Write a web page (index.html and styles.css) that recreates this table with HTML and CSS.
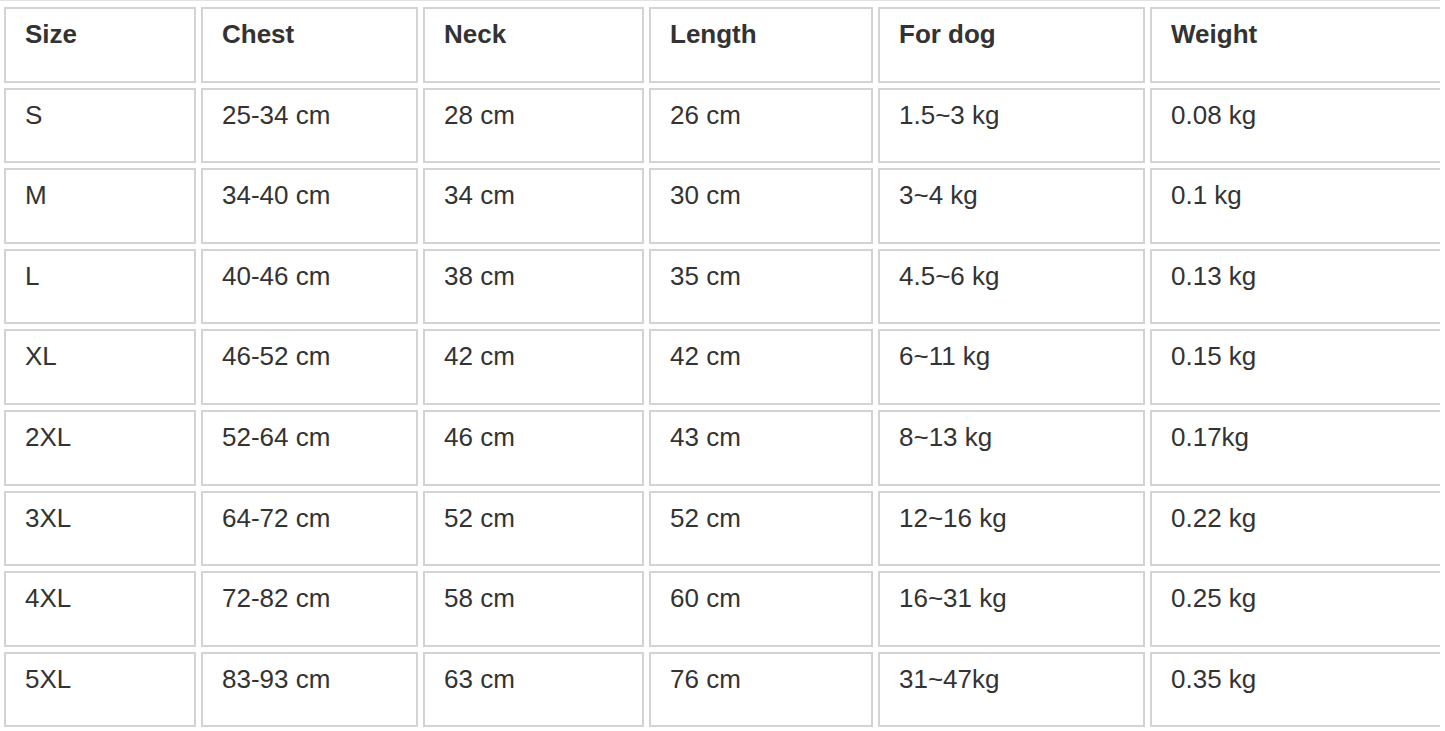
FILE: index.html
```html
<!DOCTYPE html>
<html lang="en">
<head>
<meta charset="utf-8">
<title>Size chart</title>
<link rel="stylesheet" href="styles.css">
</head>
<body>
<div class="clip">
<table class="sizes">
  <colgroup>
    <col class="c1"><col class="c2"><col class="c3"><col class="c4"><col class="c5"><col class="c6">
  </colgroup>
  <thead>
    <tr><th>Size</th><th>Chest</th><th>Neck</th><th>Length</th><th>For dog</th><th>Weight</th></tr>
  </thead>
  <tbody>
    <tr><td>S</td><td>25-34 cm</td><td>28 cm</td><td>26 cm</td><td>1.5~3 kg</td><td>0.08 kg</td></tr>
    <tr><td>M</td><td>34-40 cm</td><td>34 cm</td><td>30 cm</td><td>3~4 kg</td><td>0.1 kg</td></tr>
    <tr><td>L</td><td>40-46 cm</td><td>38 cm</td><td>35 cm</td><td>4.5~6 kg</td><td>0.13 kg</td></tr>
    <tr><td>XL</td><td>46-52 cm</td><td>42 cm</td><td>42 cm</td><td>6~11 kg</td><td>0.15 kg</td></tr>
    <tr><td>2XL</td><td>52-64 cm</td><td>46 cm</td><td>43 cm</td><td>8~13 kg</td><td>0.17kg</td></tr>
    <tr><td>3XL</td><td>64-72 cm</td><td>52 cm</td><td>52 cm</td><td>12~16 kg</td><td>0.22 kg</td></tr>
    <tr><td>4XL</td><td>72-82 cm</td><td>58 cm</td><td>60 cm</td><td>16~31 kg</td><td>0.25 kg</td></tr>
    <tr><td>5XL</td><td>83-93 cm</td><td>63 cm</td><td>76 cm</td><td>31~47kg</td><td>0.35 kg</td></tr>
  </tbody>
</table>
</div>
</body>
</html>
```
FILE: styles.css
```css
html, body {
  margin: 0;
  padding: 0;
  background: #ffffff;
}

.clip {
  width: 1440px;
  height: 731px;
  overflow: hidden;
  background: #ffffff;
}

.sizes {
  box-sizing: border-box;
  width: 1458px;
  margin-left: -2px;
  table-layout: fixed;
  border-collapse: separate;
  border-spacing: 5px;
  border: 1px solid #e2e2e2;
  padding-top: 1px;
  font-family: "Liberation Sans", Arial, Helvetica, sans-serif;
  font-size: 26px;
  color: #333333;
}

.c1 { width: 192px; }
.c2 { width: 217px; }
.c3 { width: 221px; }
.c4 { width: 224px; }
.c5 { width: 267px; }
.c6 { width: 300px; }

.sizes th,
.sizes td {
  box-sizing: border-box;
  height: 75.6px;
  border: 2px solid #d3d3d3;
  padding: 10px 10px 0 19px;
  vertical-align: top;
  text-align: left;
  white-space: nowrap;
}

.sizes th {
  font-weight: bold;
}

.sizes td {
  font-weight: normal;
}
```
